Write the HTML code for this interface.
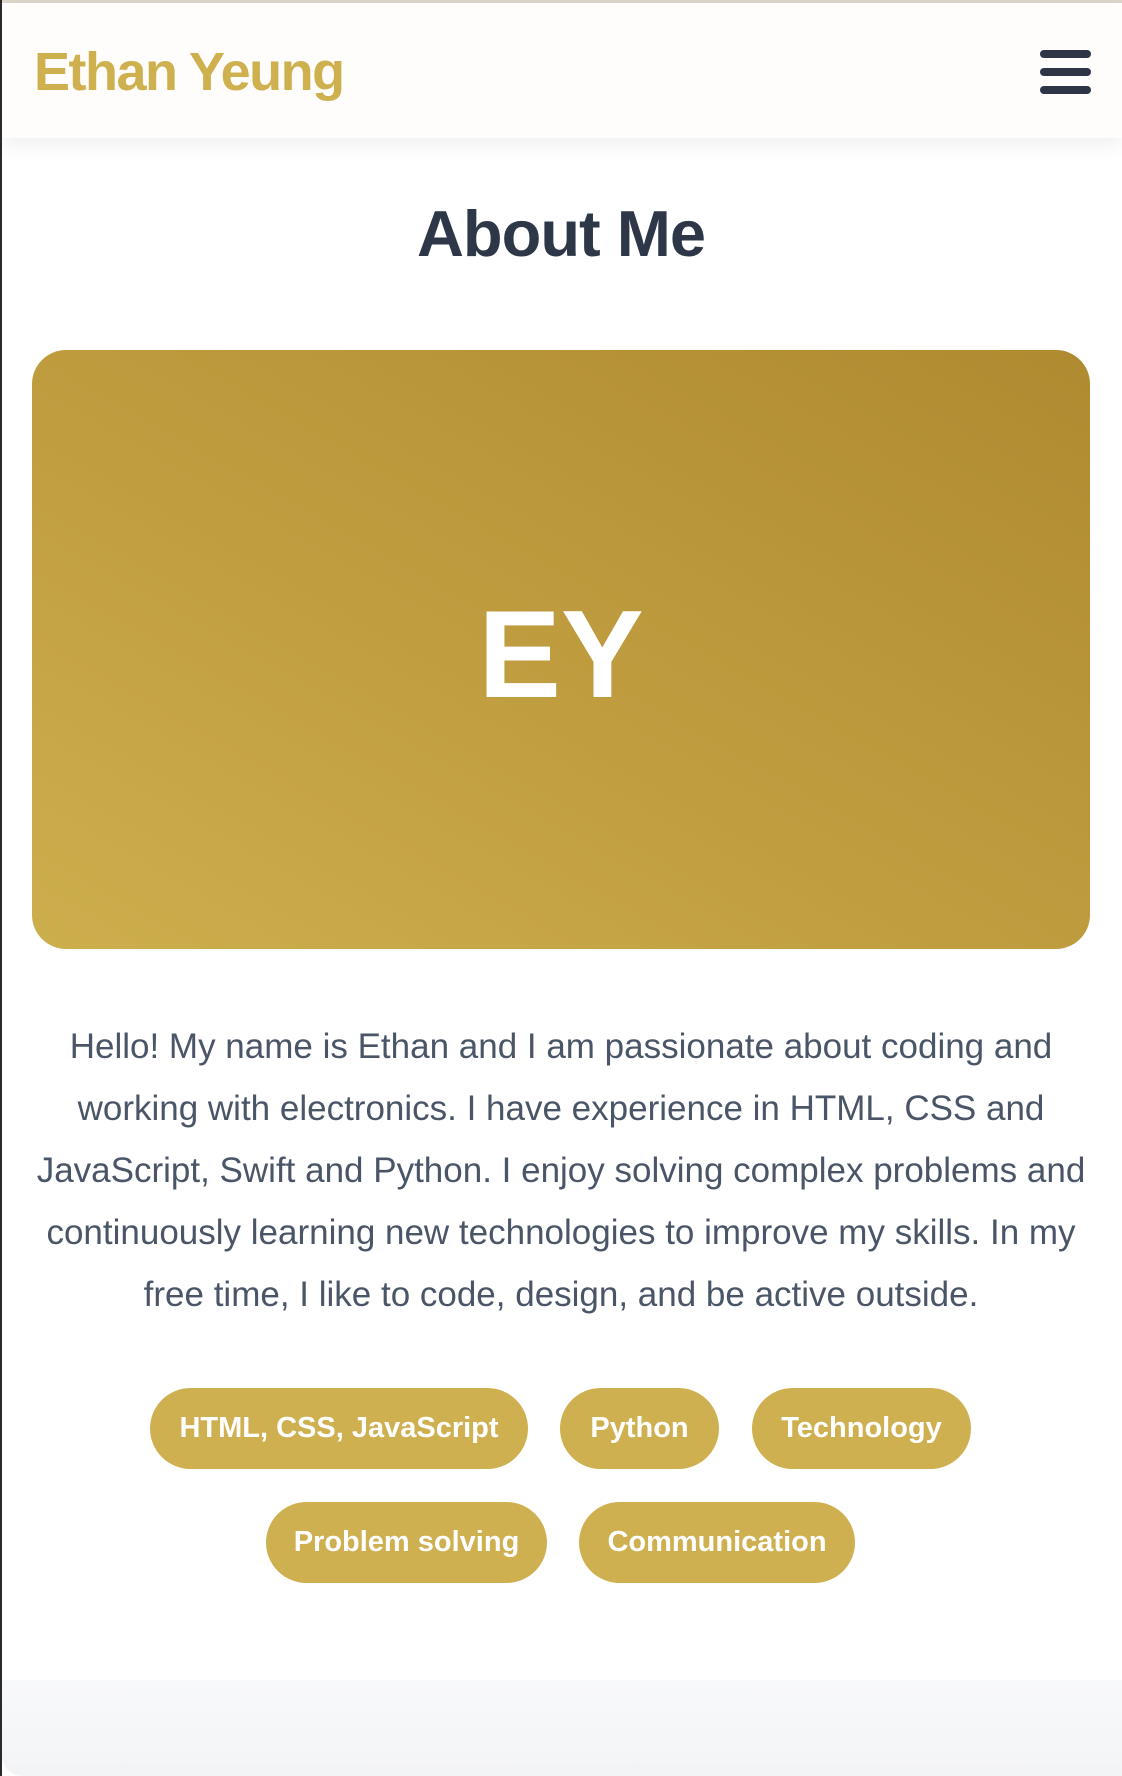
<!DOCTYPE html>
<html><head><meta charset="utf-8"><style>
*{margin:0;padding:0;box-sizing:border-box}
html,body{width:1122px;height:1776px;overflow:hidden;background:#fff;font-family:"Liberation Sans",Arial,sans-serif}
.top{position:absolute;left:0;top:0;width:1122px;height:3px;background:#dcd7ca}
.lb{position:absolute;left:0;top:0;width:2px;height:1776px;background:#2a2a2a}
header{position:absolute;left:2px;top:3px;width:1120px;height:135px;background:#fefdfb;box-shadow:0 6px 20px rgba(0,0,0,.07)}
.name{position:absolute;left:32px;top:38px;font-size:54px;font-weight:bold;color:#cfb04e;letter-spacing:-1.5px}
.bar{position:absolute;left:1038px;width:51px;height:8px;border-radius:4px;background:#2d3546}
h1{position:absolute;left:0;width:1122px;top:196px;text-align:center;font-size:65px;font-weight:bold;color:#2d3748;letter-spacing:-1px}
.card{position:absolute;left:32px;top:350px;width:1058px;height:599px;border-radius:34px;background:linear-gradient(to top right,#cdae4d,#b08a30);color:#fff;font-size:124px;font-weight:bold;text-align:center;line-height:610px}
p{position:absolute;left:0;width:1122px;top:1016px;text-align:center;font-size:35px;line-height:62px;color:#4a5568;white-space:nowrap}
.pill{position:absolute;height:81px;border-radius:41px;background:#cfb050;color:#fff;font-size:29px;font-weight:bold;text-align:center;line-height:81px}
.foot{position:absolute;left:2px;top:1680px;width:1120px;height:96px;background:linear-gradient(#f8f9fa,#f3f4f6);border-bottom-left-radius:20px}
</style></head><body>
<div class="top"></div>
<header>
<div class="name">Ethan Yeung</div>
<div class="bar" style="top:47px"></div>
<div class="bar" style="top:65px"></div>
<div class="bar" style="top:83px"></div>
</header>
<h1>About Me</h1>
<div class="card">EY</div>
<p>Hello! My name is Ethan and I am passionate about coding and<br>working with electronics. I have experience in HTML, CSS and<br>JavaScript, Swift and Python. I enjoy solving complex problems and<br>continuously learning new technologies to improve my skills. In my<br>free time, I like to code, design, and be active outside.</p>
<div class="pill" style="left:150px;top:1388px;width:378px">HTML, CSS, JavaScript</div>
<div class="pill" style="left:560px;top:1388px;width:159px">Python</div>
<div class="pill" style="left:752px;top:1388px;width:219px">Technology</div>
<div class="pill" style="left:266px;top:1502px;width:281px">Problem solving</div>
<div class="pill" style="left:579px;top:1502px;width:276px">Communication</div>
<div class="foot"></div>
<div class="lb"></div>
</body></html>
